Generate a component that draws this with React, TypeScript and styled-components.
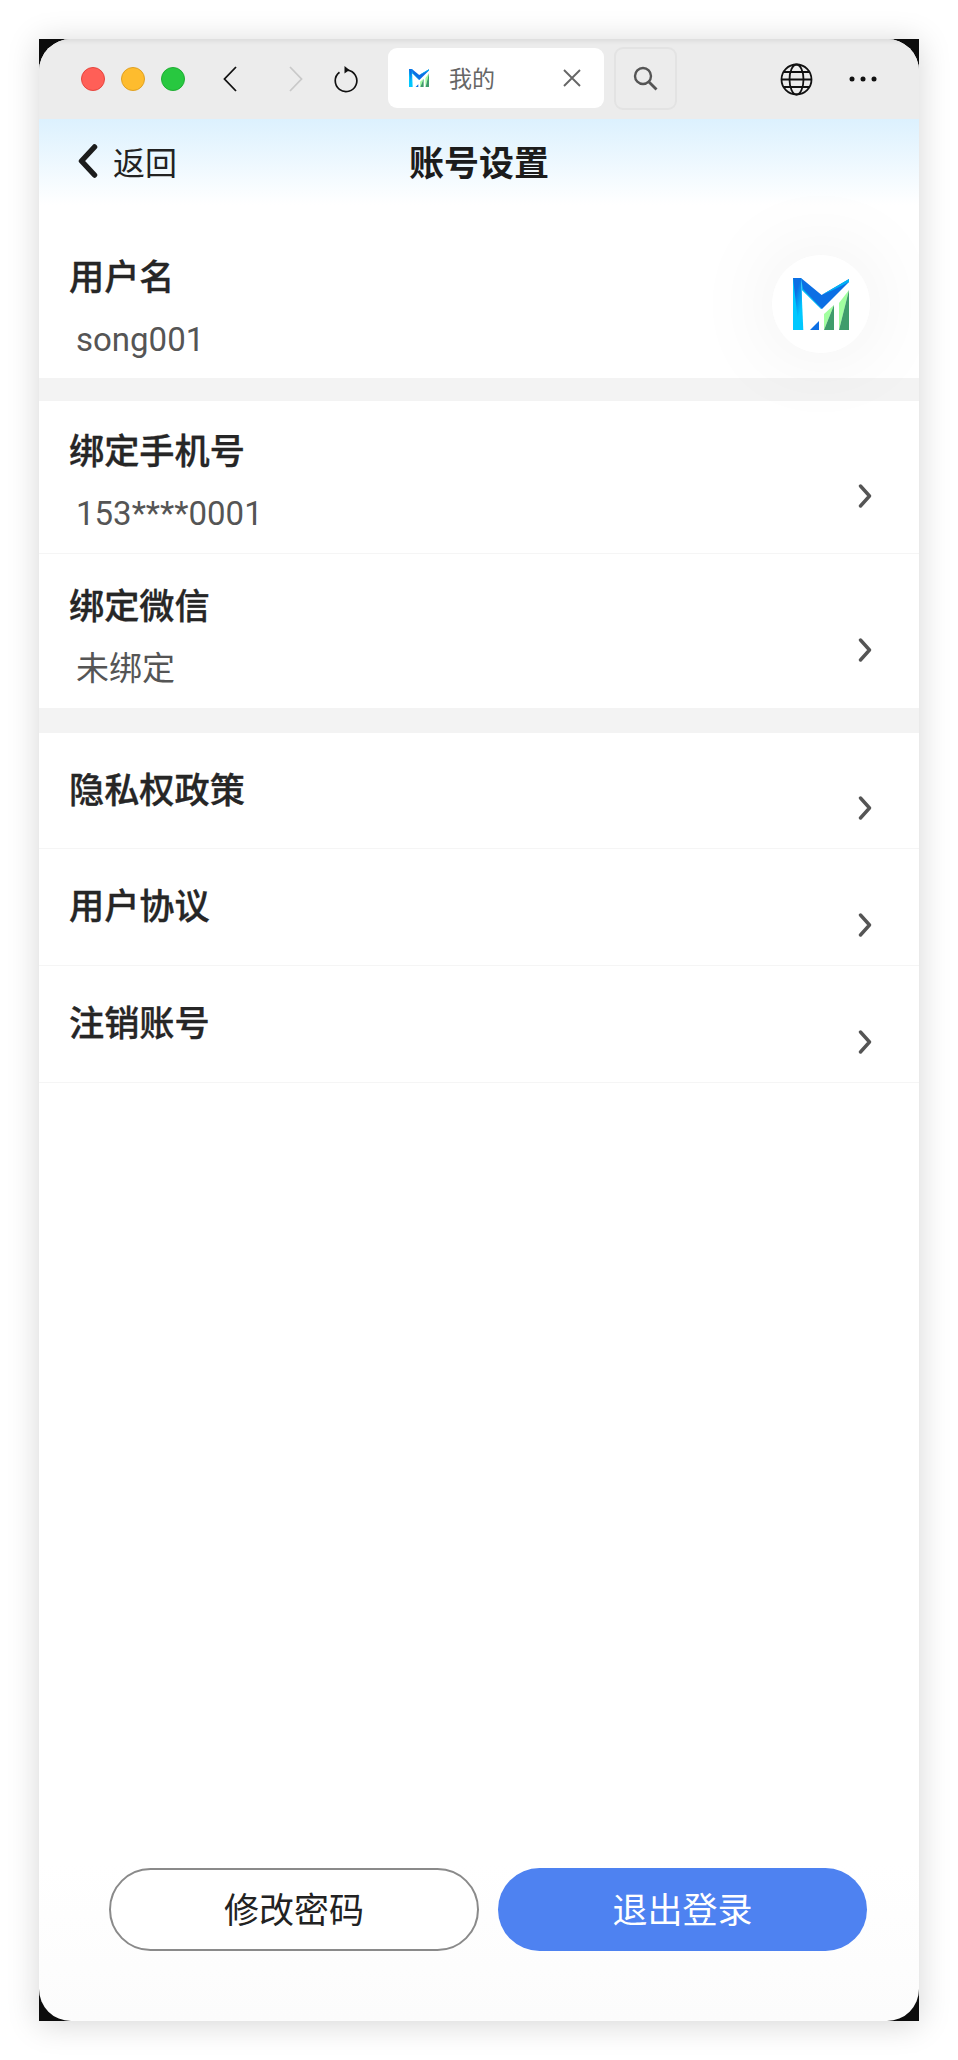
import React from "react";
import styled, { createGlobalStyle } from "styled-components";

const Global = createGlobalStyle`
  html, body { margin: 0; padding: 0; background: #fff; }
  body { font-family: "Roboto", "Noto Sans CJK SC", sans-serif; }
`;
const Page = styled.div`
  width: 958px; height: 2060px; padding: 39px; box-sizing: border-box;
`;
const Frame = styled.div`
  width: 880px; height: 1982px; background: #0c0c0c;
  box-shadow: 0 3px 30px rgba(0,0,0,.17);
`;
const Win = styled.div`
  width: 100%; height: 100%; border-radius: 32px; overflow: hidden; background: linear-gradient(#fff 92%, #fcfcfc);
  display: flex; flex-direction: column;
`;
const TitleBar = styled.div`
  height: 80px; flex: none; background: #ececec; display: flex; align-items: center; padding-left: 42px;
  box-shadow: inset 0 6px 5px -4px rgba(0,0,0,.08);
`;
const Lights = styled.div`display: flex; gap: 16px; margin-right: 38px;`;
const Light = styled.span<{ $c: string; $b: string }>`
  width: 24px; height: 24px; border-radius: 50%; background: ${p => p.$c}; box-sizing: border-box; border: 1px solid ${p => p.$b};
`;
const NavIcon = styled.svg<{ $ml?: number }>`
  flex: none; margin-left: ${p => p.$ml ?? 0}px;
`;
const Tab = styled.div`
  width: 216px; height: 60px; margin: 0 0 2px 30px; background: #fff; border-radius: 9px; display: flex; align-items: center; padding-left: 21px; box-sizing: border-box;
`;
const TabText = styled.span`
  font: 400 23px "Noto Sans CJK SC", sans-serif; color: #666; margin-left: 20px; width: 114px; margin-bottom: 2px;
`;
const SearchBtn = styled.div`
  width: 63px; height: 63px; margin: 0 0 2px 10px; border: 2px solid #e3e3e3; border-radius: 9px; box-sizing: border-box; display: flex; align-items: center; justify-content: center;
`;
const Header = styled.div`
  height: 86px; flex: none; background: linear-gradient(#dcf1fe, #fff); display: grid; grid-template-columns: 1fr auto 1fr; align-items: center; padding: 0 0 2px 39px; box-sizing: border-box;
`;
const Back = styled.div`
  display: flex; align-items: center; gap: 15px; font: 400 32px/44px "Noto Sans CJK SC", sans-serif; color: #222;
`;
const Title = styled.div`
  font: 700 35px/48px "Noto Sans CJK SC", sans-serif; color: #1c1c1c; margin-right: 39px;
`;
const Row = styled.div<{ $h?: number; $line?: boolean }>`
  box-sizing: border-box; height: ${p => p.$h}px; padding: 0 47px 0 30px; display: flex; justify-content: space-between; align-items: center; flex: none; position: relative;
  border-bottom: ${p => p.$line ? "1px solid #f5f5f5" : "none"};
`;
const Stack = styled.div<{ $mt: number }>`
  display: flex; flex-direction: column; gap: 17px; margin-top: ${p => p.$mt}px;
`;
const Label = styled.div<{ $mt?: number }>`
  font: 500 35.2px/48px "Noto Sans CJK SC", sans-serif; color: #262626; -webkit-text-stroke: 0.35px #262626; margin-top: ${p => p.$mt ?? 0}px;
`;
const Value = styled.div`
  font: 400 33px/48px "Roboto", "Noto Sans CJK SC", sans-serif; color: #555; margin-left: 7px;
`;
const Gap = styled.div<{ $h: number }>`height: ${p => p.$h}px; background: #f3f3f3; flex: none;`;
const Avatar = styled.div`
  width: 98px; height: 98px; border-radius: 50%; background: #fff; display: flex; align-items: center; justify-content: center;
  box-shadow: 0 0 90px rgba(0,0,0,.08); margin-right: 2px; margin-top: 24px; flex: none;
`;
const Chev = styled.svg<{ $mt: number }>`flex: none; margin-top: ${p => p.$mt}px;`;
const Footer = styled.div`
  margin-top: auto; padding: 0 0 70px 70px; display: flex; gap: 19px;
`;
const Btn = styled.div<{ $primary?: boolean }>`
  width: ${p => p.$primary ? 369 : 370}px; flex: none; height: 83px; padding-bottom: 5px; border-radius: 42px; box-sizing: border-box; display: flex; align-items: center; justify-content: center;
  font: 400 35px "Noto Sans CJK SC", sans-serif;
  color: ${p => p.$primary ? "#fff" : "#222"};
  background: ${p => p.$primary ? "#4e82f1" : "#fff"};
  border: ${p => p.$primary ? "none" : "2px solid #8a8a8a"};
`;

const Logo = ({ w, id }: { w: number; id: string }) => (
  <svg width={w} height={(w * 52) / 56} viewBox="0 0 56 52">
    <defs>
      <linearGradient id={id} x1="0" y1="0" x2="0.5" y2="1">
        <stop offset="0.35" stopColor="#0c6fe4" />
        <stop offset="0.85" stopColor="#00c8ff" />
      </linearGradient>
    </defs>
    <polygon points="0,0 8,0 10.3,52 0,52" fill="#00c8ff" />
    <polygon points="0,0 8,0 8.8,20 7,52 6,52" fill={`url(#${id})`} />
    <polygon points="8,0 8.8,12 28,31 29,31" fill="#00bcf5" />
    <polygon points="8,0 28.6,17 56,1 56,4 29,31 10,11" fill="#0c6fe4" />
    <polygon points="28.6,17 56,1 56,4 40,12" fill="#00b4f5" />
    <polygon points="17,52 26,43 26,52" fill="#0c6fe4" />
    <polygon points="31,36 41,27 31,52" fill="#a2ffa0" />
    <polygon points="41,27 41,52 31,52" fill="#3f9c6c" />
    <polygon points="46,25 56,12 46,52" fill="#a2ffa0" />
    <polygon points="56,12 56,52 46,52" fill="#3f9c6c" />
  </svg>
);

const Arrow = ({ mt = 36 }: { mt?: number }) => (
  <Chev $mt={mt} width="14" height="24" viewBox="0 0 14 24">
    <path d="M2.5 2 L11.5 12 L2.5 22" fill="none" stroke="#555" strokeWidth="3.4" strokeLinecap="round" strokeLinejoin="round" />
  </Chev>
);

export default function App() {
  return (
    <Page>
      <Global />
      <Frame>
        <Win>
          <TitleBar>
            <Lights>
              <Light $c="#ff5f57" $b="#e5453e" />
              <Light $c="#febc2e" $b="#dfa023" />
              <Light $c="#28c840" $b="#1fad33" />
            </Lights>
            <NavIcon width="14" height="26" viewBox="0 0 14 26">
              <path d="M13 1 L1.5 13 L13 25" fill="none" stroke="#111" strokeWidth="1.8" />
            </NavIcon>
            <NavIcon $ml={52} width="14" height="26" viewBox="0 0 14 26">
              <path d="M1 1 L12.5 13 L1 25" fill="none" stroke="#c9c9c9" strokeWidth="1.8" />
            </NavIcon>
            <NavIcon $ml={31} width="24" height="28" viewBox="0 0 24 28">
              <path d="M13.5 5.1 A10.8 10.8 0 1 1 5.5 7.2" fill="none" stroke="#111" strokeWidth="1.7" />
              <path d="M10.5 1 L15.5 5 L10.5 8.5 Z" fill="#111" />
            </NavIcon>
            <Tab>
              <Logo w={20} id="lg-tab" />
              <TabText>我的</TabText>
              <svg width="18" height="18" viewBox="0 0 18 18">
                <path d="M1 1 L17 17 M17 1 L1 17" stroke="#666" strokeWidth="1.9" />
              </svg>
            </Tab>
            <SearchBtn>
              <svg width="25" height="25" viewBox="0 0 25 25">
                <circle cx="10" cy="10" r="8" fill="none" stroke="#555" strokeWidth="2.4" />
                <path d="M15.5 15.5 L23.5 23.5" stroke="#555" strokeWidth="2.8" />
              </svg>
            </SearchBtn>
            <NavIcon $ml={103} width="33" height="33" viewBox="0 0 33 33">
              <g fill="none" stroke="#111" strokeWidth="1.8">
                <circle cx="16.5" cy="16.5" r="15" />
                <ellipse cx="16.5" cy="16.5" rx="7" ry="15" />
                <path d="M1.5 16.5 H31.5 M4 9 H29 M4 24 H29" />
              </g>
            </NavIcon>
            <NavIcon $ml={36} width="28" height="6" viewBox="0 0 28 6">
              <g fill="#111">
                <circle cx="3" cy="3" r="2.5" />
                <circle cx="14" cy="3" r="2.5" />
                <circle cx="25" cy="3" r="2.5" />
              </g>
            </NavIcon>
          </TitleBar>
          <Header>
            <Back>
              <svg width="20" height="34" viewBox="0 0 20 34">
                <path d="M16.5 3 L3.5 17 L16.5 31" fill="none" stroke="#1c1c1c" strokeWidth="5.5" strokeLinecap="round" strokeLinejoin="round" />
              </svg>
              返回
            </Back>
            <Title>账号设置</Title>
            <span />
          </Header>
          <Row $h={173}>
            <Stack $mt={31}>
              <Label>用户名</Label>
              <Value>song001</Value>
            </Stack>
            <Avatar><Logo w={56} id="lg-avatar" /></Avatar>
          </Row>
          <Gap $h={23} />
          <Row $h={153} $line>
            <Stack $mt={9}>
              <Label>绑定手机号</Label>
              <Value>153****0001</Value>
            </Stack>
            <Arrow mt={38} />
          </Row>
          <Row $h={154}>
            <Stack $mt={10}>
              <Label>绑定微信</Label>
              <Value>未绑定</Value>
            </Stack>
            <Arrow mt={38} />
          </Row>
          <Gap $h={25} />
          <Row $h={116} $line><Label $mt={-6}>隐私权政策</Label><Arrow mt={34} /></Row>
          <Row $h={117} $line><Label $mt={-6}>用户协议</Label><Arrow mt={35} /></Row>
          <Row $h={117} $line><Label $mt={-6}>注销账号</Label><Arrow mt={35} /></Row>
          <Footer>
            <Btn>修改密码</Btn>
            <Btn $primary>退出登录</Btn>
          </Footer>
        </Win>
      </Frame>
    </Page>
  );
}
